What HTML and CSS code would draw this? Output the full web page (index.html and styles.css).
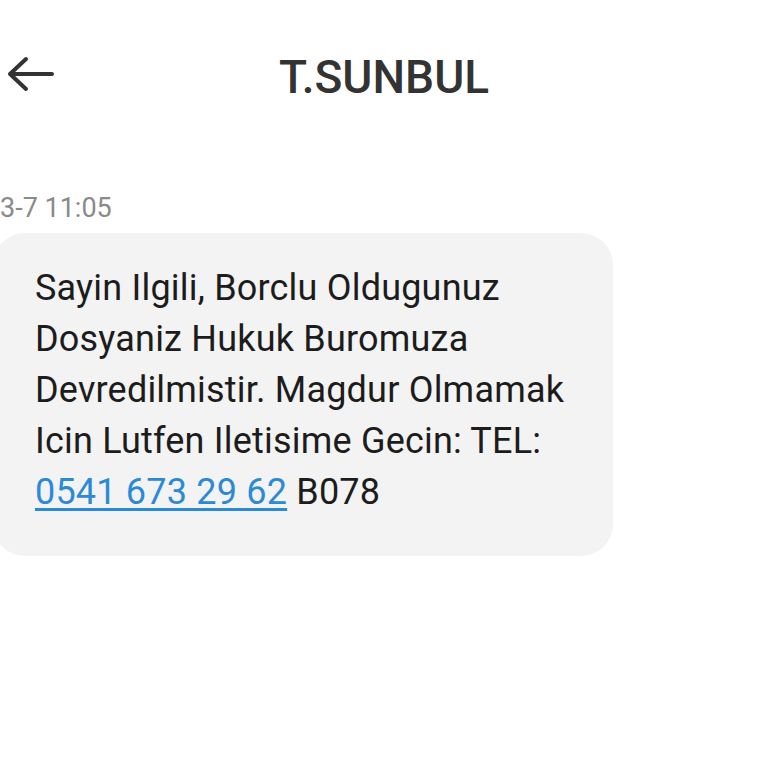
FILE: index.html
```html
<!DOCTYPE html>
<html lang="tr">
<head>
    <meta charset="UTF-8">
    <meta name="viewport" content="width=device-width, initial-scale=1.0">
    <title>T.SUNBUL</title>
    <link rel="stylesheet" href="styles.css">
</head>
<body>

    <header class="top-bar">
        <button class="back-button" aria-label="Back">
            <svg width="48" height="36" viewBox="0 0 48 36">
                <path d="M4 18 H46 M20 3 L4 18 L20 33" fill="none" stroke="#333" stroke-width="4" stroke-linecap="round" stroke-linejoin="round"/>
            </svg>
        </button>
        <h1 class="title">T.SUNBUL</h1>
    </header>

    <main class="thread">
        <div class="timestamp">3-7 11:05</div>
        <div class="bubble">
            <p>Sayin Ilgili, Borclu Oldugunuz Dosyaniz Hukuk Buromuza Devredilmistir. Magdur Olmamak Icin Lutfen Iletisime Gecin: TEL: <a href="tel:05416732962">0541 673 29 62</a> B078</p>
        </div>
    </main>

</body>
</html>
```

FILE: styles.css
```css
body {
  margin: 0;
  background-color: #ffffff;
  font-family: Roboto, "Noto Sans", sans-serif;
  color: #1a1a1a;
  overflow: hidden;
}
.top-bar {
  position: relative;
  height: 150px;
  display: flex;
  align-items: flex-start;
}
.back-button {
  background: none;
  border: none;
  padding: 0;
  margin: 56px 0 0 6px;
  cursor: pointer;
}
.title {
  position: absolute;
  left: 0;
  right: 0;
  top: 50px;
  margin: 0;
  text-align: center;
  font-size: 46px;
  font-weight: 500;
  color: #333333;
}
.thread {
  padding: 0;
}
.timestamp {
  font-size: 27px;
  color: #8a8a8a;
  margin: 42px 0 9px 0;
}
.bubble {
  width: 620px;
  margin-left: -7px;
  background-color: #f3f3f3;
  border-radius: 32px;
  padding: 30px 28px 38px 42px;
  box-sizing: border-box;
}
.bubble p {
  margin: 0;
  font-size: 36px;
  line-height: 51px;
  letter-spacing: 0.2px;
  color: #1c1c1c;
}
.bubble a {
  color: #2b8ad8;
  text-decoration: underline;
  text-underline-offset: 4px;
}
```
